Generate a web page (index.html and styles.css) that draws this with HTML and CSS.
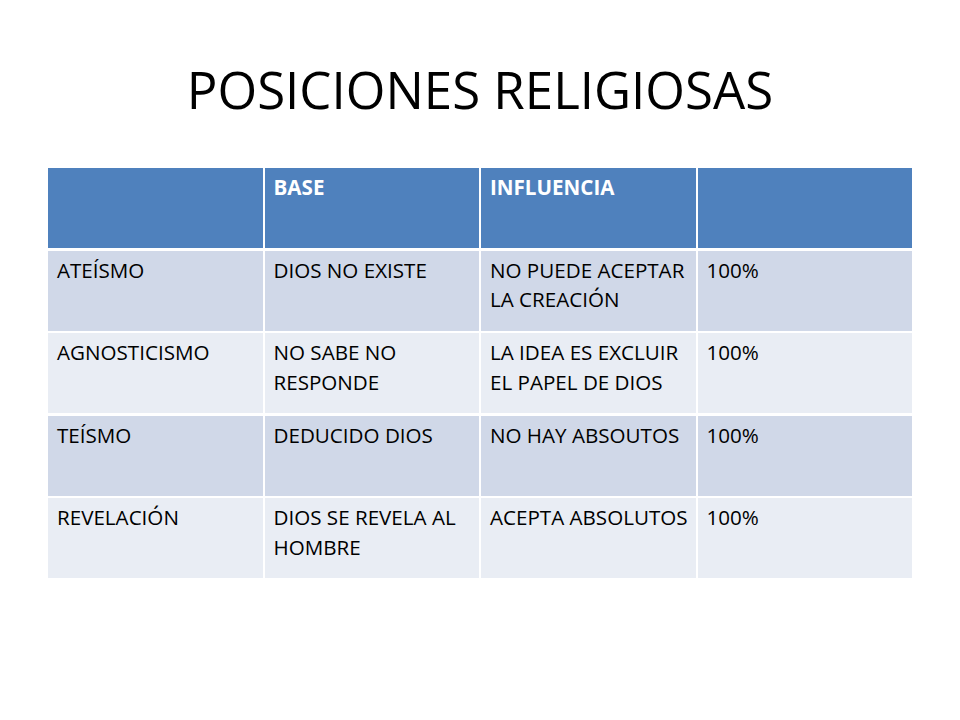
FILE: index.html
```html
<!DOCTYPE html>
<html lang="es">
<head>
<meta charset="utf-8">
<title>POSICIONES RELIGIOSAS</title>
<link rel="stylesheet" href="styles.css">
</head>
<body>
<div class="slide">
  <h1 class="title">POSICIONES RELIGIOSAS</h1>
  <div class="table" role="table">
    <div class="cell head"></div>
    <div class="cell head">BASE</div>
    <div class="cell head">INFLUENCIA</div>
    <div class="cell head"></div>

    <div class="cell odd">ATEÍSMO</div>
    <div class="cell odd">DIOS NO EXISTE</div>
    <div class="cell odd">NO PUEDE ACEPTAR LA CREACIÓN</div>
    <div class="cell odd">100%</div>

    <div class="cell even">AGNOSTICISMO</div>
    <div class="cell even">NO SABE NO RESPONDE</div>
    <div class="cell even">LA IDEA ES EXCLUIR EL PAPEL DE DIOS</div>
    <div class="cell even">100%</div>

    <div class="cell odd">TEÍSMO</div>
    <div class="cell odd">DEDUCIDO DIOS</div>
    <div class="cell odd">NO HAY ABSOUTOS</div>
    <div class="cell odd">100%</div>

    <div class="cell even">REVELACIÓN</div>
    <div class="cell even">DIOS SE REVELA AL HOMBRE</div>
    <div class="cell even">ACEPTA ABSOLUTOS</div>
    <div class="cell even">100%</div>
  </div>
</div>
</body>
</html>
```
FILE: styles.css
```css
html, body {
  margin: 0;
  padding: 0;
  background: #ffffff;
}

.slide {
  width: 960px;
  height: 720px;
  display: flex;
  flex-direction: column;
  align-items: center;
  font-family: "Open Sans", "Liberation Sans", sans-serif;
  color: #000000;
}

.title {
  margin: 61px 0 0 0;
  height: 56px;
  font-size: 51px;
  line-height: 56px;
  font-weight: 400;
  white-space: nowrap;
}

.table {
  margin-top: 51px;
  width: 864px;
  display: grid;
  grid-template-columns: repeat(4, 1fr);
  grid-auto-rows: 80px;
  column-gap: 2px;
  row-gap: 2.5px;
}

.cell {
  padding: 5px 4px 0 9px;
  font-size: 20.6px;
  line-height: 29.5px;
}

.head {
  background: #4f81bd;
  color: #ffffff;
  font-weight: 700;
}

.odd {
  background: #d0d8e8;
}

.even {
  background: #e9edf4;
}
```
